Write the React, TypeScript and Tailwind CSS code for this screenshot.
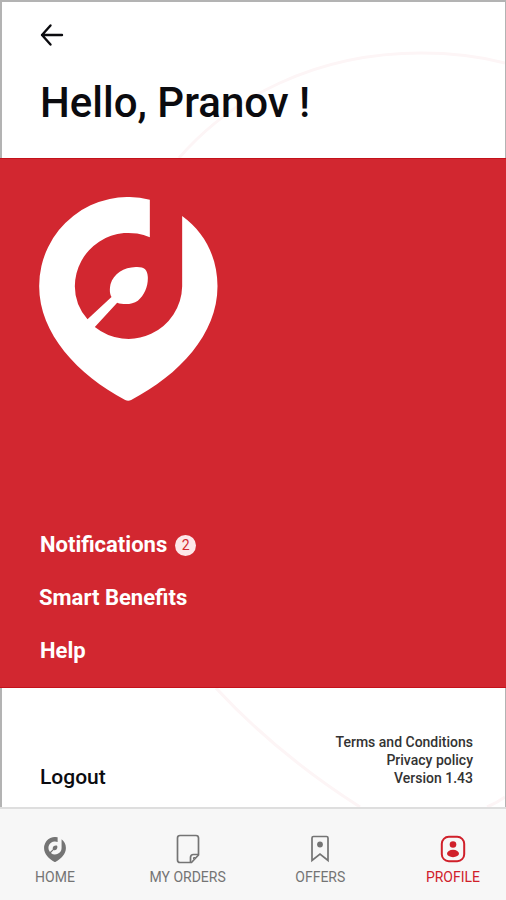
import type { ReactNode } from "react"

const LOGO_PATH =
  "M390 58V171A161 161 0 0 0 165 318Q165 374 203 417L275 350C269 340 269 326 272 312C281 280 312 261 348 260C373 259 383 267 384 290C385 318 374 344 354 361C337 373 312 374 292 367L225 440A161 161 0 0 0 487 318V107C553 154 593 230 593 318C593 462 478 584 334 659Q325 664 316 659C174 584 58 460 58 318A267 267 0 0 1 390 58Z"

function Logo({ className }: { className?: string }) {
  return (
    <svg viewBox="58 50 536 612" fill="currentColor" className={className} aria-hidden="true">
      <path d={LOGO_PATH} />
    </svg>
  )
}

function OrdersIcon() {
  return (
    <svg viewBox="0 0 24 30" fill="none" stroke="currentColor" strokeWidth="1.7" className="h-[30px] w-6" aria-hidden="true">
      <path d="M4 1.5H20Q22.5 1.5 22.5 4V21L15.5 28.5H4Q1.5 28.5 1.5 26V4Q1.5 1.5 4 1.5Z" />
      <path d="M14.5 28V23.500Q14.500 20.500 17.500 20.500H22.500" />
      <path d="M17.500 25V23.500H19.500" strokeWidth="1" />
    </svg>
  )
}

function OffersIcon() {
  return (
    <svg viewBox="0 0 20 28" fill="none" stroke="currentColor" strokeWidth="1.7" className="h-7 w-5" aria-hidden="true">
      <path d="M3.5 1.5H16.5Q18 1.5 18 3V25.5L10 19L2 25.5V3Q2 1.5 3.5 1.5Z" />
      <circle cx="10" cy="9.5" r="2.9" fill="currentColor" stroke="none" />
    </svg>
  )
}

function ProfileIcon() {
  return (
    <svg viewBox="0 0 26 28" fill="none" stroke="currentColor" className="h-7 w-[26px]" aria-hidden="true">
      <rect x="1.800" y="1.800" width="22.400" height="24.400" rx="7" strokeWidth="2" />
      <circle cx="13" cy="9.5" r="3.3" fill="currentColor" stroke="none" />
      <ellipse cx="13" cy="18.500" rx="6" ry="3.700" fill="currentColor" stroke="none" />
    </svg>
  )
}

interface NavItemProps {
  label: string
  icon: ReactNode
  active?: boolean
}

function NavItem({ label, icon, active }: NavItemProps) {
  return (
    <a
      href="#"
      aria-current={active ? "page" : undefined}
      className={`flex w-20 flex-col items-center gap-0.5 text-sm ${active ? "text-[#d0202a]" : "text-[#747474]"}`}
    >
      <span className="flex h-8 items-center">{icon}</span>
      <span className="leading-5 whitespace-nowrap">{label}</span>
    </a>
  )
}

export default function App() {
  return (
    <div className="flex min-h-screen flex-col bg-white font-[Roboto,sans-serif] text-[#0b0b0f]">
      <header className="relative h-[158px] border-t-2 border-r border-l-2 border-[#b3b3b3] pt-5 pl-[38px]">
        <svg viewBox="0 0 330 156" fill="none" className="absolute right-0 bottom-0 h-[156px] w-[330px]" aria-hidden="true">
          <path d="M4 156C56 96 140 51 246 51Q292 51 330 61" stroke="#fdf5f6" strokeWidth="3" />
        </svg>
        <button type="button" aria-label="Back" className="relative block">
          <svg viewBox="0 0 24 26" fill="none" stroke="currentColor" strokeWidth="2.4" strokeLinecap="round" strokeLinejoin="round" className="h-[26px] w-6" aria-hidden="true">
            <path d="M22 13H2M10.5 3.5L2 13L10.5 22.5" />
          </svg>
        </button>
        <h1 className="relative mt-[29px] text-[42px] leading-[52px] font-medium">Hello, Pranov !</h1>
      </header>

      <main className="flex grow flex-col justify-between border-y border-[#c4121b] bg-[#d22730] px-[39px] pt-[38px] pb-5 text-white">
        <Logo className="h-[204px] w-[179px]" />
        <nav aria-label="Account" className="flex flex-col items-start gap-[21px] text-[22px] leading-8 font-bold">
          <a href="#" className="flex items-center gap-2 pl-px">
            Notifications
            <span className="flex size-[21px] items-center justify-center rounded-full bg-[#fde7e9] text-sm font-normal text-[#d22730]">2</span>
          </a>
          <a href="#">Smart Benefits</a>
          <a href="#" className="pl-px">Help</a>
        </nav>
      </main>

      <footer className="relative flex h-[119px] items-end justify-between border-r border-l-2 border-[#b3b3b3] pr-8 pb-4 pl-[38px]">
        <svg viewBox="0 0 290 119" fill="none" className="absolute right-0 bottom-0 h-[119px] w-[290px]" aria-hidden="true">
          <path d="M1 0Q62 66 145 119M272 119Q282 115 290 109" stroke="#fdf5f6" strokeWidth="3" />
        </svg>
        <button type="button" className="relative text-[21px] leading-7 font-medium">Logout</button>
        <div className="relative flex flex-col items-end pb-1 text-sm leading-[18px] font-medium text-[#333333]">
          <a href="#">Terms and Conditions</a>
          <a href="#">Privacy policy</a>
          <p>Version 1.43</p>
        </div>
      </footer>

      <nav aria-label="Main" className="flex h-[93px] items-start justify-between border-t-2 border-[#dedede] bg-[#f7f7f7] pt-6 pr-[13px] pl-[15px]">
        <NavItem label="HOME" icon={<Logo className="h-[25px] w-[22px]" />} />
        <NavItem label="MY ORDERS" icon={<OrdersIcon />} />
        <NavItem label="OFFERS" icon={<OffersIcon />} />
        <NavItem label="PROFILE" icon={<ProfileIcon />} active />
      </nav>
    </div>
  )
}
